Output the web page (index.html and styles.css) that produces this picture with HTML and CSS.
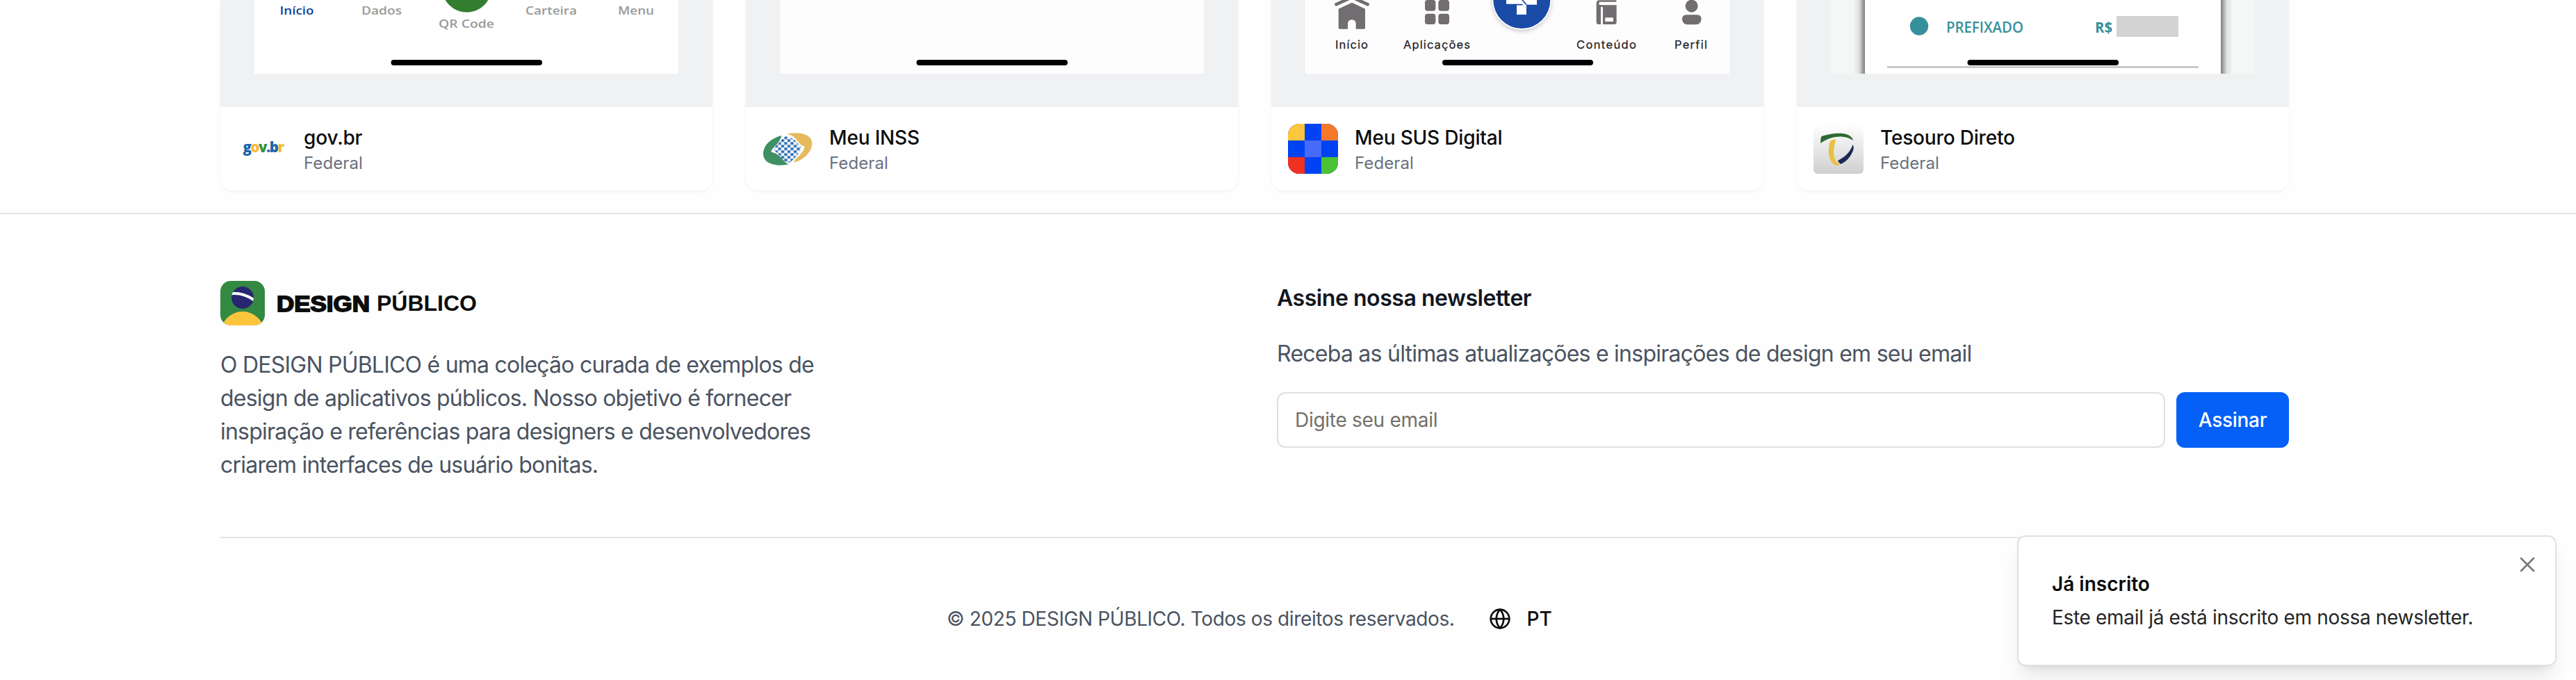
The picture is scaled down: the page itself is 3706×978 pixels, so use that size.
FILE: index.html
```html
<!DOCTYPE html>
<html lang="pt-BR">
<head>
<meta charset="utf-8">
<title>Design Público</title>
<link rel="stylesheet" href="styles.css">
</head>
<body>
<main class="container cards">
  <article class="card">
    <div class="preview">
      <svg class="shot" viewBox="0 0 610 106" font-family="Open Sans, sans-serif" font-size="17" font-weight="600">
        <rect width="610" height="106" fill="#fff"/>
        <circle cx="305.500" cy="-18" r="35.700" fill="#337d2e"/>
        <text x="36.500" y="20.700" textLength="49" lengthAdjust="spacingAndGlyphs" fill="#113f9b">Início</text>
        <g fill="#999">
          <text x="154" y="20.700" textLength="58" lengthAdjust="spacingAndGlyphs">Dados</text>
          <text x="265" y="39.700" textLength="80" lengthAdjust="spacingAndGlyphs">QR Code</text>
          <text x="390" y="20.700" textLength="74" lengthAdjust="spacingAndGlyphs">Carteira</text>
          <text x="523" y="20.700" textLength="52" lengthAdjust="spacingAndGlyphs">Menu</text>
        </g>
        <rect x="196.500" y="86" width="217.500" height="8" rx="4" fill="#000005"/>
      </svg>
    </div>
    <div class="meta">
      <svg class="app-icon" viewBox="0 0 72 72">
        <text x="8.500" y="41" font-family="Open Sans, sans-serif" font-weight="800" font-size="20.500" letter-spacing="-1.450" fill="#1b63ad">g<tspan fill="#fab833">o</tspan><tspan fill="#2f943b">v</tspan>.b<tspan fill="#fab833">r</tspan></text>
      </svg>
      <div><h3 class="name">gov.br</h3><p class="level">Federal</p></div>
    </div>
  </article>

  <article class="card">
    <div class="preview">
      <svg class="shot" viewBox="0 0 610 106">
        <rect width="610" height="106" fill="#fdfdfd"/>
        <rect x="196.500" y="86" width="217.500" height="8" rx="4" fill="#000005"/>
      </svg>
    </div>
    <div class="meta">
      <svg class="app-icon" viewBox="0 0 72 72">
        <defs>
          <pattern id="checks" x="145" y="127" width="27" height="24" patternUnits="userSpaceOnUse">
            <path d="M0 0h13v11H0zM13.500 12h13v11h-13z" fill="#2a6cb4"/>
          </pattern>
        </defs>
        <g transform="scale(.33333) translate(-51 -24)">
          <path d="M133 75C85 88 54 116 54 156C56 195 105 211 165 199C142 192 128 151 89 146C88 128 125 113 133 75Z" fill="#3f8f62"/>
          <path d="M155 67C205 58 265 65 265 110C262 150 225 182 186 191C191 172 233 150 232 121C204 118 204 79 155 67Z" fill="#e6b95c"/>
          <path d="M150 78C168 80 186 88 196 101Q206 114 216 122Q219 134 209 149Q194 169 170 191Q148 191 135 178Q125 157 104 141Q99 131 110 118Q123 108 132 93Z" fill="url(#checks)"/>
        </g>
      </svg>
      <div><h3 class="name">Meu INSS</h3><p class="level">Federal</p></div>
    </div>
  </article>

  <article class="card">
    <div class="preview">
      <svg class="shot" viewBox="0 0 610 106" font-family="Inter, sans-serif" font-size="16.500" font-weight="400" fill="#1d1c1f">
        <defs>
          <filter id="soft" x="-30%" y="-30%" width="160%" height="160%"><feGaussianBlur stdDeviation="10"/></filter>
        </defs>
        <rect width="610" height="106" fill="#fefdfe"/>
        <g transform="translate(32 0) scale(.33333)">
          <g fill="#726d70">
            <path d="M37 19L105-12L173 19" fill="none" stroke="#726d70" stroke-width="14" stroke-linecap="round"/>
            <path d="M105 11L162 38V120Q162 125 157 125H122V102A17.500 17.500 0 0 0 87 102V125H52Q47 125 47 120V38Z"/>
            <rect x="420" y="0" width="46" height="47" rx="11"/><rect x="478" y="0" width="47" height="47" rx="11"/>
            <rect x="420" y="59" width="46" height="46" rx="11"/><rect x="478" y="59" width="47" height="46" rx="11"/>
            <path d="M1160 13Q1160 1 1174 1H1246V8H1176Q1171 8 1171 15Q1171 22 1178 22H1247V95Q1247 105 1237 105H1188V30H1179V105H1170Q1160 105 1160 95Z"/>
            <rect x="1198" y="76" width="35" height="17" fill="#fff"/>
            <circle cx="1571" cy="26" r="27"/>
            <path d="M1549 64H1594Q1613 64 1613 82Q1611 106 1590 106H1552Q1532 106 1530 82Q1530 64 1549 64Z"/>
          </g>
          <circle cx="838" cy="8" r="126" fill="#8b7b88" opacity=".5" filter="url(#soft)"/>
          <circle cx="838" cy="1" r="128" fill="#fff"/>
          <circle cx="838" cy="0" r="123" fill="#1a4ba6"/>
          <path d="M771-25H903V20H858V63H816V20H771Z" fill="#fff"/>
          <path d="M828-14L858 20M771 20H842" fill="none" stroke="#1a4ba6" stroke-width="5"/>
        </g>
        <g stroke="#1d1c1f" stroke-width=".25">
          <text x="43" y="69.700" textLength="47">Início</text>
          <text x="141" y="69.700" textLength="96">Aplicações</text>
          <text x="390" y="69.700" textLength="86">Conteúdo</text>
          <text x="531" y="69.700" textLength="47">Perfil</text>
        </g>
        <rect x="197" y="86" width="217" height="8" rx="4" fill="#000005"/>
      </svg>
    </div>
    <div class="meta">
      <svg class="app-icon app-icon-round" viewBox="0 0 72 72">
        <rect width="72" height="72" fill="#0043f5"/>
        <rect width="24" height="24" fill="#fcc63e"/><rect x="48" width="24" height="24" fill="#f6792b"/>
        <rect x="24" y="24" width="24" height="24" fill="#476af8"/>
        <rect y="48" width="24" height="24" fill="#f03120"/><rect x="48" y="48" width="24" height="24" fill="#4bc136"/>
      </svg>
      <div><h3 class="name">Meu SUS Digital</h3><p class="level">Federal</p></div>
    </div>
  </article>

  <article class="card">
    <div class="preview">
      <svg class="shot" viewBox="0 0 610 106" font-family="Open Sans, sans-serif" fill="#36909a">
        <defs>
          <linearGradient id="edge"><stop offset="0" stop-color="#f5f7f6"/><stop offset=".5" stop-color="#dfe1e0"/><stop offset="1" stop-color="#7d7e7e"/></linearGradient>
          <linearGradient id="edge-r"><stop offset="0" stop-color="#7d7e7e"/><stop offset=".5" stop-color="#dfe1e0"/><stop offset="1" stop-color="#f5f7f6"/></linearGradient>
        </defs>
        <rect width="610" height="106" fill="#f5f7f6"/>
        <rect x="32" width="17" height="106" fill="url(#edge)"/>
        <rect x="561" width="17" height="106" fill="url(#edge-r)"/>
        <rect x="49" width="512" height="106" fill="#fff"/>
        <circle cx="127" cy="37.500" r="13.200"/>
        <text x="166" y="47" font-size="21.500" font-weight="600" textLength="111" lengthAdjust="spacingAndGlyphs">PREFIXADO</text>
        <text x="380" y="47" font-size="21.500" font-weight="700" textLength="25" lengthAdjust="spacingAndGlyphs">R$</text>
        <rect x="411" y="23" width="89" height="30" fill="#d3d3d3"/>
        <rect x="81" y="95.500" width="448" height="2" fill="#b3b3b3"/>
        <rect x="196.500" y="86" width="217.500" height="8" rx="4" fill="#000005"/>
      </svg>
    </div>
    <div class="meta">
      <svg class="app-icon app-icon-soft" viewBox="0 0 72 72">
        <defs>
          <linearGradient id="silver" x2="0" y2="1"><stop offset="0" stop-color="#fff"/><stop offset="1" stop-color="#cfcfcf"/></linearGradient>
        </defs>
        <rect width="72" height="72" fill="url(#silver)"/>
        <path d="M10 28L10.700 20Q11 17.500 15 17C28 13 46 12 53 18Q57 21 56.500 24C48 17 28 15 10 28Z" fill="#2d6a33"/>
        <path d="M24 25Q28 22 32 22.500C28 38 27 53 38 58Q36 60.500 33 60C21 56 20 38 24 25Z" fill="#eac03f"/>
        <path d="M56.500 30Q58.500 33 57.500 37C54 47 48 54 39.500 58Q36 56 35 53C45 48 53 41 56.500 30Z" fill="#1c2755"/>
      </svg>
      <div><h3 class="name">Tesouro Direto</h3><p class="level">Federal</p></div>
    </div>
  </article>
</main>

<footer class="footer">
  <div class="container">
    <div class="columns">
      <section>
        <svg class="brand" viewBox="0 0 380 64" fill="#0c0c0c">
          <defs><clipPath id="badge"><rect width="64" height="64" rx="15"/></clipPath><clipPath id="head"><circle cx="32" cy="24" r="16"/></clipPath></defs>
          <g clip-path="url(#badge)">
            <rect width="64" height="64" fill="#338942"/>
            <circle cx="32" cy="24" r="16" fill="#282671"/>
            <path d="M14 18.500C26 17 38 20 49 28" fill="none" stroke="#fff" stroke-width="4" clip-path="url(#head)"/>
            <circle cx="32" cy="75.500" r="31.500" fill="#fbc53d"/>
          </g>
          <text x="81" y="43.700" font-family="Liberation Sans, Arial, sans-serif" font-weight="700" font-size="31.500" textLength="134" lengthAdjust="spacingAndGlyphs" stroke="#0c0c0c" stroke-width="1.800">DESIGN</text>
          <text x="225" y="43" font-family="Liberation Sans, Arial, sans-serif" font-weight="700" font-size="32" textLength="144" lengthAdjust="spacingAndGlyphs">PÚBLICO</text>
        </svg>
        <p class="about">O DESIGN PÚBLICO é uma coleção curada de exemplos de<br>design de aplicativos públicos. Nosso objetivo é fornecer<br>inspiração e referências para designers e desenvolvedores<br>criarem interfaces de usuário bonitas.</p>
      </section>
      <section>
        <h2 class="heading">Assine nossa newsletter</h2>
        <p class="lead">Receba as últimas atualizações e inspirações de design em seu email</p>
        <form class="signup">
          <input class="field" type="email" placeholder="Digite seu email">
          <button class="submit" type="button">Assinar</button>
        </form>
      </section>
    </div>
    <div class="legal">
      <p class="copyright">© 2025 DESIGN PÚBLICO. Todos os direitos reservados.</p>
      <button class="language" type="button">
        <svg class="globe" viewBox="0 0 24 24"><circle cx="12" cy="12" r="10"/><path d="M12 2a15.300 15.300 0 0 1 4 10 15.300 15.300 0 0 1-4 10 15.300 15.300 0 0 1-4-10 15.300 15.300 0 0 1 4-10z"/><path d="M2 12h20"/></svg>
        <span>PT</span>
      </button>
    </div>
  </div>
</footer>

<aside class="toast">
  <h4 class="toast-title">Já inscrito</h4>
  <p class="toast-text">Este email já está inscrito em nossa newsletter.</p>
  <svg class="close" viewBox="0 0 32 32"><path d="M7 7L25 25M25 7L7 25"/></svg>
</aside>
</body>
</html>
```
FILE: styles.css
```css
* {
  box-sizing: border-box;
  margin: 0;
  padding: 0;
}

body {
  height: 978px;
  overflow: hidden;
  background: #fefefe;
  font-family: Inter, "Liberation Sans", sans-serif;
  font-size: 28px;
  line-height: 40px;
  color: #0c0c0c;
}

.container {
  width: 2976px;
  margin-left: 317px;
}

/* App cards */
.cards {
  display: grid;
  grid-template-columns: repeat(4, 1fr);
  gap: 48px;
  height: 306px;
  padding-bottom: 32px;
}

.card {
  overflow: hidden;
  border-radius: 0 0 18px 18px;
  background: #fff;
  box-shadow: 0 2px 4px rgba(0, 0, 0, .05);
}

.preview {
  height: 154px;
  padding: 0 49px;
  background: #f0f1f3;
}

.shot {
  display: block;
  width: 610px;
  height: 106px;
}

.meta {
  display: flex;
  gap: 24px;
  padding: 24px;
}

.app-icon {
  width: 72px;
  height: 72px;
}

.app-icon-round {
  border-radius: 16px;
}

.app-icon-soft {
  border-radius: 6px;
}

.name {
  font-size: 28px;
  font-weight: 500;
  letter-spacing: -.17px;
}

.level {
  margin-top: 1px;
  font-size: 24px;
  line-height: 32px;
  letter-spacing: .1px;
  color: #6a7080;
}

/* Footer */
.footer {
  height: 672px;
  padding-top: 96px;
  border-top: 2px solid #e2e3e8;
}

.columns {
  display: grid;
  grid-template-columns: 1fr 1fr;
  gap: 64px;
  height: 370px;
  border-bottom: 2px solid #e5e6ea;
}

.brand {
  display: block;
  width: 380px;
  height: 64px;
}

.about {
  margin-top: 33px;
  font-size: 32px;
  line-height: 48px;
  letter-spacing: -.77px;
  color: #4a5361;
}

.heading {
  padding-top: 1px;
  font-size: 32px;
  font-weight: 600;
  line-height: 48px;
  letter-spacing: -.45px;
  color: #111722;
}

.lead {
  margin-top: 32px;
  font-size: 32px;
  line-height: 48px;
  letter-spacing: -.75px;
  color: #4a5361;
}

.signup {
  display: flex;
  gap: 16px;
  margin-top: 31px;
}

.field {
  flex: 1;
  height: 80px;
  padding: 0 24px;
  border: 2px solid #e0e0e0;
  border-radius: 12px;
  background: #fff;
  font: inherit;
  letter-spacing: -.28px;
}

.field::placeholder {
  color: #737069;
  opacity: 1;
}

.submit {
  width: 162px;
  height: 80px;
  border: 0;
  border-radius: 12px;
  background: #0560f8;
  color: #fff;
  font: inherit;
  font-weight: 500;
  letter-spacing: -.3px;
}

.legal {
  display: flex;
  align-items: center;
  gap: 49px;
  height: 232px;
  padding-left: 1045px;
}

.copyright {
  letter-spacing: -.38px;
  color: #4a5361;
}

.language {
  display: flex;
  align-items: center;
  gap: 23px;
  border: 0;
  background: none;
  font: inherit;
  font-weight: 500;
  color: #0c0c0c;
}

.globe {
  width: 32px;
  height: 32px;
  fill: none;
  stroke: #0c0c0c;
  stroke-width: 2;
}

/* Notification over the page */
.toast {
  position: absolute;
  top: 770px;
  right: 28px;
  width: 776px;
  height: 188px;
  padding: 48px;
  border: 2px solid #e0e0e0;
  border-radius: 12px;
  background: #fff;
  box-shadow: 0 20px 30px -6px rgba(0, 0, 0, .1), 0 8px 12px -8px rgba(0, 0, 0, .1);
}

.toast-title {
  font-size: 28px;
  font-weight: 600;
}

.toast-text {
  margin-top: 8px;
  letter-spacing: -.32px;
  color: #252525;
}

.close {
  position: absolute;
  top: 24px;
  right: 24px;
  width: 32px;
  height: 32px;
  fill: none;
  stroke: #777;
  stroke-width: 2.6;
  stroke-linecap: round;
}
```
